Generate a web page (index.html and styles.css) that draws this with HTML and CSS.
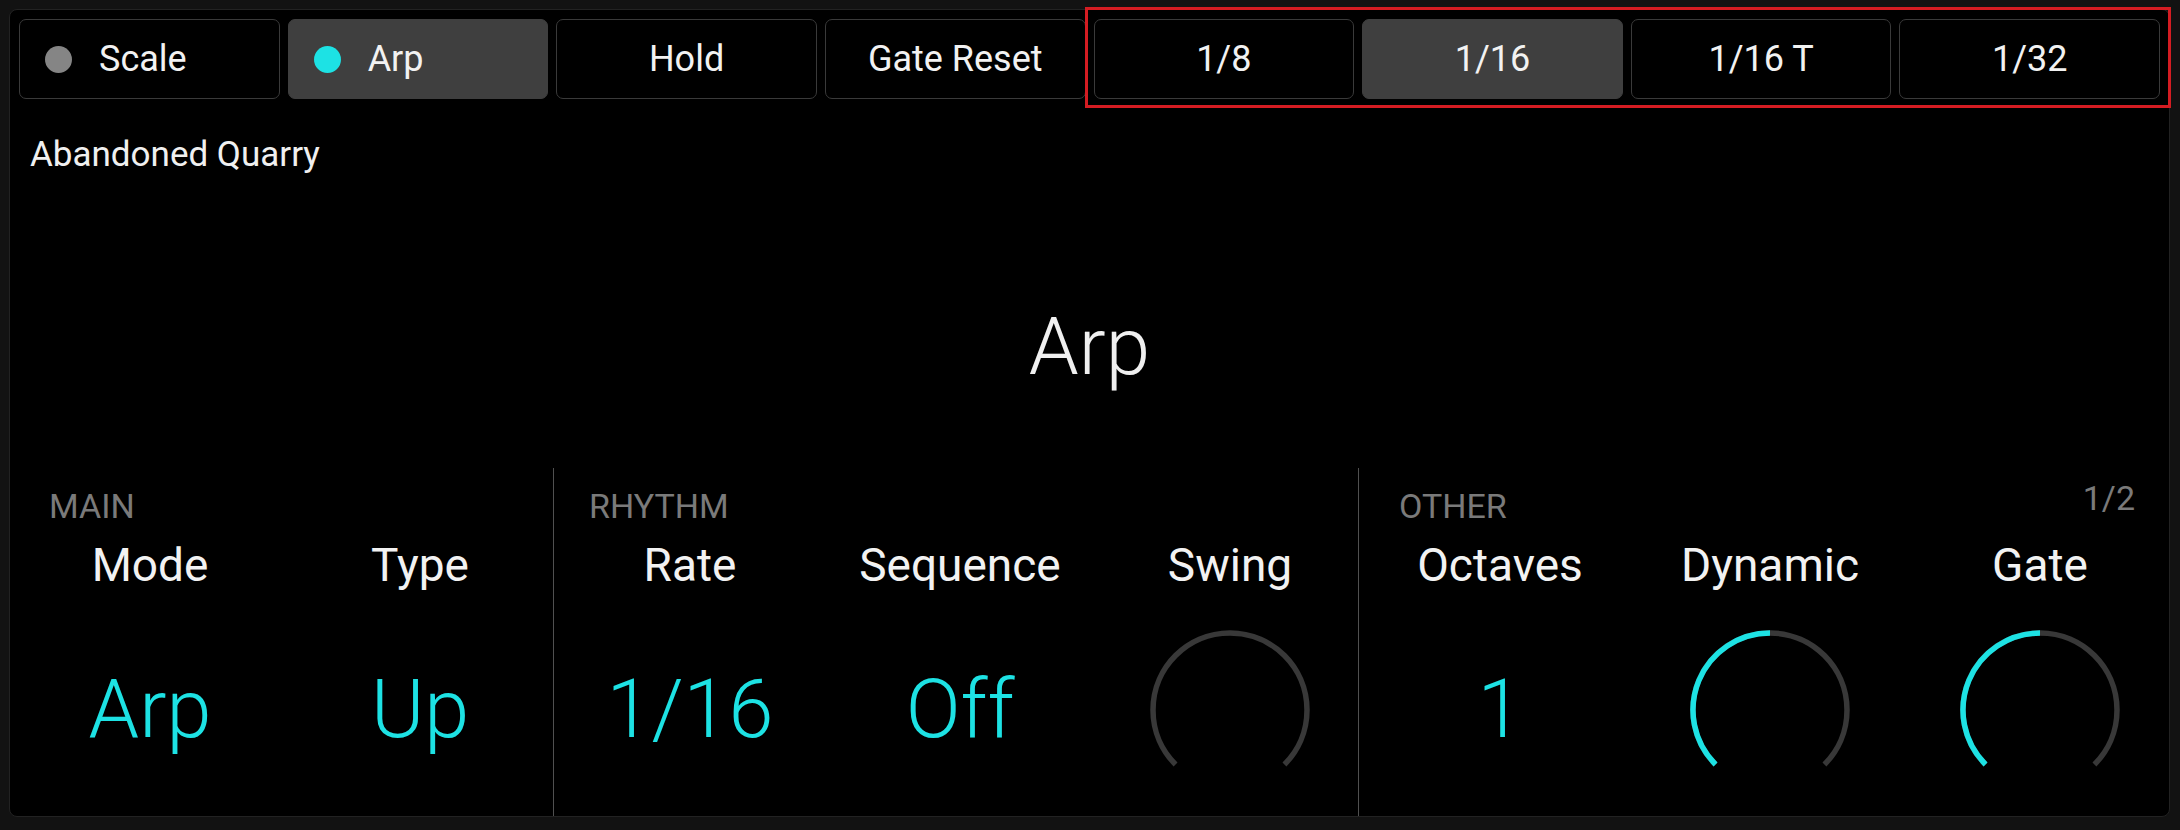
FILE: index.html
```html
<!DOCTYPE html>
<html lang="en">
<head>
<meta charset="utf-8">
<title>Arp</title>
<link rel="stylesheet" href="styles.css">
</head>
<body>
<div class="panel">
  <div class="toprow">
    <div class="group">
      <div class="btn btn-left"><span class="dot dot-off"></span>Scale</div>
      <div class="btn btn-left active"><span class="dot dot-on"></span>Arp</div>
      <div class="btn">Hold</div>
      <div class="btn">Gate Reset</div>
    </div>
    <div class="group rates">
      <div class="btn">1/8</div>
      <div class="btn active">1/16</div>
      <div class="btn">1/16 T</div>
      <div class="btn">1/32</div>
    </div>
  </div>

  <div class="preset">Abandoned Quarry</div>
  <div class="title">Arp</div>

  <div class="sections">
    <section class="sec sec-main">
      <div class="sec-head"><span class="sec-label">MAIN</span></div>
      <div class="cols">
        <div class="param">
          <div class="pname">Mode</div>
          <div class="pctl"><span class="val">Arp</span></div>
        </div>
        <div class="param">
          <div class="pname">Type</div>
          <div class="pctl"><span class="val">Up</span></div>
        </div>
      </div>
    </section>

    <section class="sec sec-rhythm">
      <div class="sec-head"><span class="sec-label">RHYTHM</span></div>
      <div class="cols">
        <div class="param">
          <div class="pname">Rate</div>
          <div class="pctl"><span class="val">1/16</span></div>
        </div>
        <div class="param">
          <div class="pname">Sequence</div>
          <div class="pctl"><span class="val">Off</span></div>
        </div>
        <div class="param">
          <div class="pname">Swing</div>
          <div class="pctl">
            <svg class="knob" width="170" height="170" viewBox="0 0 170 170">
              <path class="knob-track" d="M30.55 139.45 A77 77 0 1 1 139.45 139.45"/>
            </svg>
          </div>
        </div>
      </div>
    </section>

    <section class="sec sec-other">
      <div class="sec-head"><span class="sec-label">OTHER</span><span class="page">1/2</span></div>
      <div class="cols">
        <div class="param">
          <div class="pname">Octaves</div>
          <div class="pctl"><span class="val">1</span></div>
        </div>
        <div class="param">
          <div class="pname">Dynamic</div>
          <div class="pctl">
            <svg class="knob" width="170" height="170" viewBox="0 0 170 170">
              <path class="knob-track" d="M30.55 139.45 A77 77 0 1 1 139.45 139.45"/>
              <path class="knob-value" d="M30.55 139.45 A77 77 0 0 1 85 8"/>
            </svg>
          </div>
        </div>
        <div class="param">
          <div class="pname">Gate</div>
          <div class="pctl">
            <svg class="knob" width="170" height="170" viewBox="0 0 170 170">
              <path class="knob-track" d="M30.55 139.45 A77 77 0 1 1 139.45 139.45"/>
              <path class="knob-value" d="M30.55 139.45 A77 77 0 0 1 85 8"/>
            </svg>
          </div>
        </div>
      </div>
    </section>
  </div>
</div>
</body>
</html>
```

FILE: styles.css
```css
* {
  box-sizing: border-box;
}

html, body {
  margin: 0;
  padding: 0;
}

body {
  width: 2180px;
  height: 830px;
  background: #121212;
  font-family: Roboto, "Liberation Sans", Arial, sans-serif;
  color: #f0f0f0;
  overflow: hidden;
}

.panel {
  margin: 9px 10px 0 9px;
  height: 808px;
  background: #000;
  border: 1px solid #222;
  border-radius: 8px;
  display: flex;
  flex-direction: column;
}

/* ---------- top buttons ---------- */
.toprow {
  display: flex;
  gap: 8px;
  padding: 9px 9px 0 9px;
}

.group {
  flex: 1 1 0;
  min-width: 0;
  display: flex;
  gap: 8px;
}

.rates {
  position: relative;
}

.rates::after {
  content: "";
  position: absolute;
  top: -12px;
  left: -9px;
  right: -11px;
  bottom: -9px;
  border: 3px solid #d41c22;
  pointer-events: none;
}

.btn {
  flex: none;
  width: calc((100% - 24px) / 4);
  height: 80px;
  border: 1px solid #3a3a3a;
  border-radius: 7px;
  background: #000;
  display: flex;
  align-items: center;
  justify-content: center;
  font-size: 36px;
  color: #f2f2f2;
  white-space: nowrap;
}

.btn-left {
  justify-content: flex-start;
  padding-left: 25px;
}

.btn.active {
  background: #3f3f3f;
  border-color: #3f3f3f;
}

.dot {
  width: 27px;
  height: 27px;
  border-radius: 50%;
  margin-right: 27px;
  flex-shrink: 0;
}

.dot-off {
  background: #858585;
}

.dot-on {
  background: #1de2e4;
}

/* ---------- preset + title ---------- */
.preset {
  margin-top: 36px;
  padding-left: 20px;
  font-size: 35px;
  line-height: 40px;
  color: #f0f0f0;
}

.title {
  margin-top: 125px;
  text-align: center;
  font-size: 80px;
  font-weight: 300;
  line-height: 94px;
  color: #f0f0f0;
}

/* ---------- sections ---------- */
.sections {
  margin-top: 74px;
  flex: 1;
  display: flex;
}

.sec {
  flex-shrink: 0;
  display: flex;
  flex-direction: column;
}

.sec-main {
  width: 543px;
  padding-left: 5px;
}

.sec-rhythm {
  width: 805px;
  padding-left: 1px;
  border-left: 1px solid #505050;
}

.sec-other {
  flex: 1;
  padding-left: 6px;
  border-left: 1px solid #505050;
}

.sec-head {
  padding-top: 18px;
  height: 58px;
  display: flex;
  justify-content: space-between;
  align-items: flex-start;
}

.sec-label {
  margin-left: 34px;
  font-size: 34px;
  line-height: 40px;
  color: #7a7a7a;
}

.page {
  margin-top: -8px;
  margin-right: 40px;
  font-size: 34px;
  line-height: 40px;
  color: #7a7a7a;
}

.cols {
  display: flex;
}

.param {
  width: 270px;
  flex-shrink: 0;
  display: flex;
  flex-direction: column;
  align-items: center;
}

.pname {
  margin-top: 12px;
  font-size: 46px;
  line-height: 54px;
  color: #f2f2f2;
  white-space: nowrap;
}

.pctl {
  margin-top: 33px;
  height: 170px;
  width: 170px;
  display: flex;
  align-items: center;
  justify-content: center;
}

.val {
  font-size: 81px;
  font-weight: 300;
  line-height: 96px;
  color: #1de2e4;
  white-space: nowrap;
}

.knob {
  display: block;
  overflow: visible;
}

.knob-track,
.knob-value {
  fill: none;
  stroke-width: 5.5;
  stroke-linecap: butt;
}

.knob-track {
  stroke: #383838;
}

.knob-value {
  stroke: #1de2e4;
}
```
